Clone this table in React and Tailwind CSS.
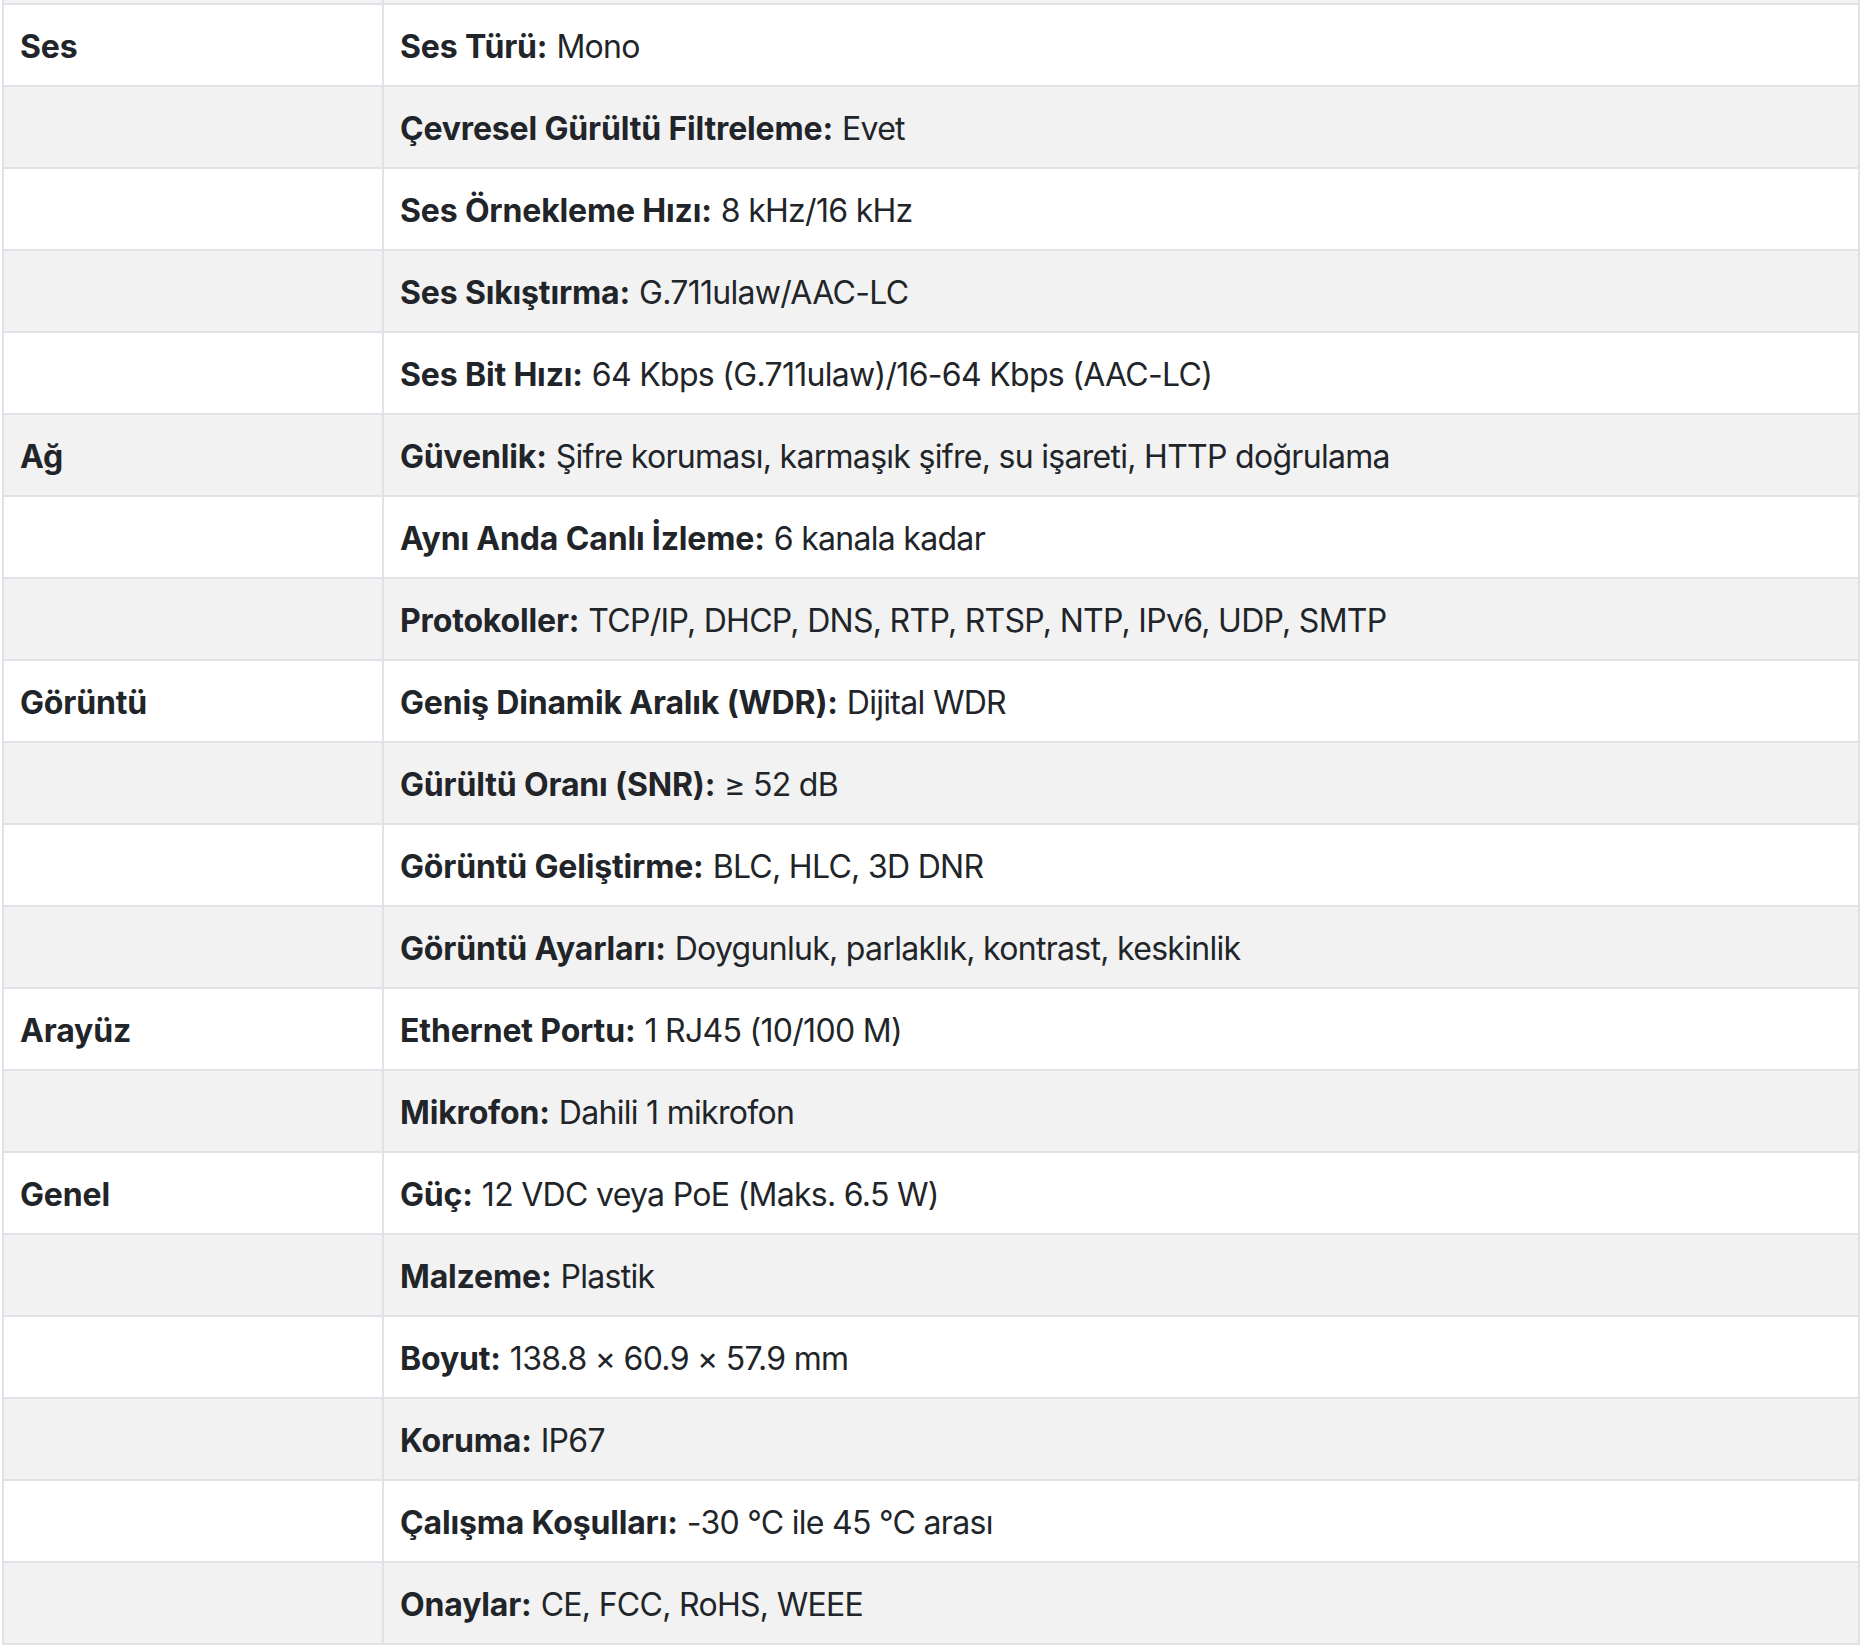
import React from "react";

const rows = [
  { group: "Ses", label: "Ses Türü:", value: "Mono" },
  { label: "Çevresel Gürültü Filtreleme:", value: "Evet" },
  { label: "Ses Örnekleme Hızı:", value: "8 kHz/16 kHz" },
  { label: "Ses Sıkıştırma:", value: "G.711ulaw/AAC-LC" },
  { label: "Ses Bit Hızı:", value: "64 Kbps (G.711ulaw)/16-64 Kbps (AAC-LC)" },
  { group: "Ağ", label: "Güvenlik:", value: "Şifre koruması, karmaşık şifre, su işareti, HTTP doğrulama" },
  { label: "Aynı Anda Canlı İzleme:", value: "6 kanala kadar" },
  { label: "Protokoller:", value: "TCP/IP, DHCP, DNS, RTP, RTSP, NTP, IPv6, UDP, SMTP" },
  { group: "Görüntü", label: "Geniş Dinamik Aralık (WDR):", value: "Dijital WDR" },
  { label: "Gürültü Oranı (SNR):", value: "≥ 52 dB" },
  { label: "Görüntü Geliştirme:", value: "BLC, HLC, 3D DNR" },
  { label: "Görüntü Ayarları:", value: "Doygunluk, parlaklık, kontrast, keskinlik" },
  { group: "Arayüz", label: "Ethernet Portu:", value: "1 RJ45 (10/100 M)" },
  { label: "Mikrofon:", value: "Dahili 1 mikrofon" },
  { group: "Genel", label: "Güç:", value: "12 VDC veya PoE (Maks. 6.5 W)" },
  { label: "Malzeme:", value: "Plastik" },
  { label: "Boyut:", value: "138.8 × 60.9 × 57.9 mm" },
  { label: "Koruma:", value: "IP67" },
  { label: "Çalışma Koşulları:", value: "-30 °C ile 45 °C arası" },
  { label: "Onaylar:", value: "CE, FCC, RoHS, WEEE" },
];

const cell = "border-2 border-[#dfe2e6] px-4 pt-[18px] pb-[14px] align-top";

export default function App() {
  return (
    <div className="min-h-screen bg-white font-['Inter',sans-serif] text-[32px] leading-[48px] text-[#212529]">
      <table className="ml-[2px] w-[1858px] border-collapse">
        <tbody>
          {/* tail of the previous row, cut off at the top */}
          <tr className="bg-[#f2f2f2]">
            <td className="h-[4px] w-[380px] border-2 border-t-0 border-[#dfe2e6] p-0" />
            <td className="h-[4px] border-2 border-t-0 border-[#dfe2e6] p-0" />
          </tr>
          {rows.map((r, i) => (
            <tr key={i} className={i % 2 === 1 ? "bg-[#f2f2f2]" : "bg-white"}>
              <td className={`${cell} w-[380px] font-bold tracking-[-0.005em]`}>{r.group || ""}</td>
              <td className={cell}>
                <strong className="font-bold tracking-[-0.005em]">{r.label}</strong>{" "}
                <span className="tracking-[-0.022em]">{r.value}</span>
              </td>
            </tr>
          ))}
        </tbody>
      </table>
    </div>
  );
}
